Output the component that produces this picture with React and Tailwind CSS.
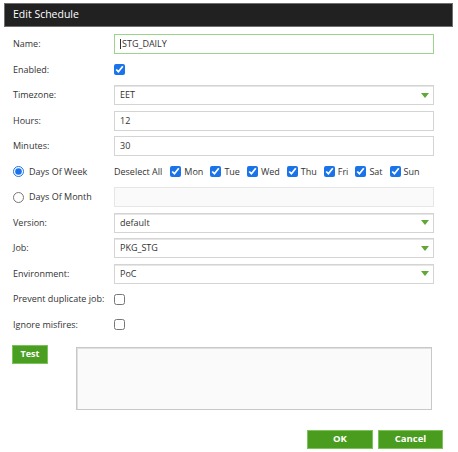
import React from 'react';

const font = { fontFamily: '"Open Sans", "Liberation Sans", sans-serif' };

function Arrow() {
  return (
    <svg width="8" height="5" viewBox="0 0 8 5" className="shrink-0">
      <path d="M0 0 H8 L4 5 Z" fill="#5fa737" />
    </svg>
  );
}

function Row({ label, children }) {
  return (
    <div className="flex h-[20px] items-center">
      <div className="w-[101px] shrink-0 text-[9px] text-[#333]">{label}</div>
      {children}
    </div>
  );
}

function TextBox({ value, green }) {
  return (
    <div
      className={`flex h-[20px] w-[320px] items-center border px-[5px] text-[9px] text-[#333] ${
        green ? 'border-[#9ed48a]' : 'border-[#d4d4d4]'
      }`}
    >
      {green && <span className="mr-px h-[10px] w-px bg-[#333]" />}
      {value}
    </div>
  );
}

function Select({ value }) {
  return (
    <div className="flex h-[20px] w-[320px] items-center justify-between border border-[#d4d4d4] bg-white pl-[5px] pr-[4px] text-[9px] text-[#333] shadow-[inset_0_1px_0_#e6e6e6]">
      <span>{value}</span>
      <Arrow />
    </div>
  );
}

function Check({ checked }) {
  return (
    <input
      type="checkbox"
      defaultChecked={checked}
      className="m-0 h-[11px] w-[11px] shrink-0 accent-[#1a73e8]"
    />
  );
}

const days = ['Mon', 'Tue', 'Wed', 'Thu', 'Fri', 'Sat', 'Sun'];

export default function App() {
  return (
    <div className="h-[452px] w-[458px] bg-white pl-[4px] pt-[3px]" style={font}>
      {/* Header */}
      <div className="flex h-[24px] w-[449px] items-center border border-[#6f6f6f] bg-[#212121] pl-[8px] text-[10.5px] text-white">
        Edit Schedule
      </div>

      {/* Form */}
      <div className="mt-[7px] flex flex-col gap-[5.5px] pl-[9px]">
        <Row label="Name:">
          <TextBox value="STG_DAILY" green />
        </Row>
        <Row label="Enabled:">
          <Check checked />
        </Row>
        <Row label="Timezone:">
          <Select value="EET" />
        </Row>
        <Row label="Hours:">
          <TextBox value="12" />
        </Row>
        <Row label="Minutes:">
          <TextBox value="30" />
        </Row>
        <Row
          label={
            <label className="flex items-center gap-[5px]">
              <input type="radio" name="mode" defaultChecked className="m-0 h-[11px] w-[11px] accent-[#1a73e8]" />
              Days Of Week
            </label>
          }
        >
          <div className="flex items-center whitespace-nowrap text-[9px] text-[#333]">
            <span className="mr-[8px] shrink-0">Deselect All</span>
            {days.map((d) => (
              <label key={d} className="mr-[7px] flex shrink-0 items-center gap-[3px]">
                <Check checked />
                <span>{d}</span>
              </label>
            ))}
          </div>
        </Row>
        <Row
          label={
            <label className="flex items-center gap-[5px]">
              <input type="radio" name="mode" className="m-0 h-[11px] w-[11px] accent-[#1a73e8]" />
              Days Of Month
            </label>
          }
        >
          <div className="h-[20px] w-[320px] border border-[#e6e6e6] bg-[#fafafa]" />
        </Row>
        <Row label="Version:">
          <Select value="default" />
        </Row>
        <Row label="Job:">
          <Select value="PKG_STG" />
        </Row>
        <Row label="Environment:">
          <Select value="PoC" />
        </Row>
        <Row label="Prevent duplicate job:">
          <Check />
        </Row>
        <Row label="Ignore misfires:">
          <Check />
        </Row>
      </div>

      {/* Test + output */}
      <div className="mt-[10px] flex items-start pl-[8px]">
        <button className="h-[19px] w-[36px] border border-[#7cc35a] bg-[#4a9e22] text-[9px] font-bold text-white">
          Test
        </button>
        <div className="ml-[28px] mt-[2px] h-[63px] w-[356px] border border-[#c8c8c8] bg-[#fafafa] shadow-[inset_1px_1px_0_#e0e0e0]" />
      </div>

      {/* Footer */}
      <div className="mt-[20px] flex justify-end gap-[5px] pr-[15px]">
        <button className="h-[19px] w-[66px] border border-[#7cc35a] bg-[#4a9c1f] text-[9.5px] font-bold text-white">
          OK
        </button>
        <button className="h-[19px] w-[65px] border border-[#7cc35a] bg-[#4a9c1f] text-[9.5px] font-bold text-white">
          Cancel
        </button>
      </div>
    </div>
  );
}
